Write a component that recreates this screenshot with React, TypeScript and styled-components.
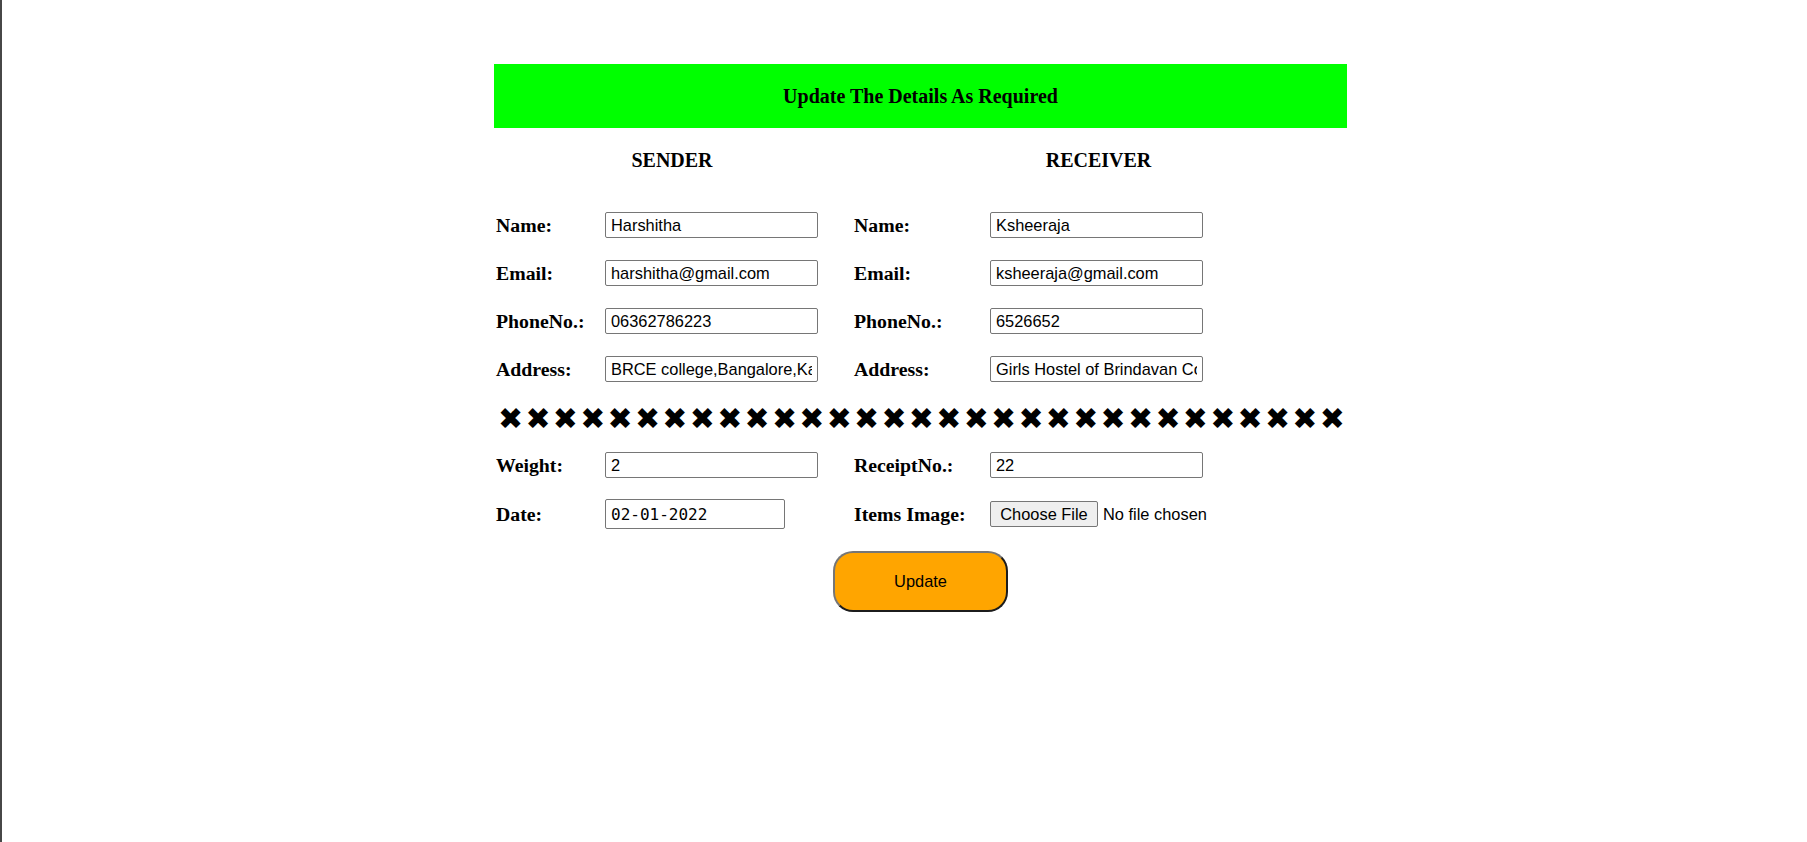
import React from "react";
import styled, { createGlobalStyle } from "styled-components";

const GlobalStyle = createGlobalStyle`
  html, body {
    margin: 0;
    padding: 0;
    background: #ffffff;
  }
  body {
    font-family: "Liberation Serif", "Times New Roman", serif;
    color: #000;
  }
`;

const Page = styled.div`
  box-sizing: border-box;
  min-height: 100vh;
  border-left: 2px solid #474747;
  padding: 64px 0 0 32px;
  display: flex;
  justify-content: center;
  align-items: flex-start;
`;

const Card = styled.div`
  width: 853px;
  display: flex;
  flex-direction: column;
`;

const Banner = styled.div`
  height: 64px;
  background: #00ff00;
  display: flex;
  align-items: center;
  justify-content: center;
  font: bold 20px "Liberation Serif", "Times New Roman", serif;
`;

const FormGrid = styled.div`
  display: grid;
  grid-template-columns: 109px 247px 138px 359px;
  grid-template-rows: 73px repeat(4, 48px) 48px 48px 50px;
`;

const Heading = styled.div`
  grid-column: span 2;
  align-self: start;
  height: 64px;
  display: flex;
  align-items: center;
  justify-content: center;
  font: bold 20px "Liberation Serif", "Times New Roman", serif;
`;

const Label = styled.div<{ $inset?: number }>`
  display: flex;
  align-items: center;
  padding-left: ${(p) => p.$inset ?? 2}px;
  font: bold 19.8px "Liberation Serif", "Times New Roman", serif;
  white-space: nowrap;
`;

const Field = styled.div`
  display: flex;
  align-items: center;
  padding-left: 2px;
`;

const TextInput = styled.input`
  box-sizing: border-box;
  width: 213px;
  height: 26px;
  border: 1px solid #767676;
  border-radius: 2px;
  padding: 0 5px;
  background: #fff;
  color: #000;
  font: 16.4px "Liberation Sans", Arial, sans-serif;
  outline: none;
`;

const DateInput = styled(TextInput)`
  width: 180px;
  height: 30px;
  font-family: "DejaVu Sans Mono", "Liberation Mono", monospace;
  font-size: 16px;
`;

const FileButton = styled.button`
  box-sizing: border-box;
  width: 108px;
  height: 26px;
  padding: 0;
  background: #efefef;
  border: 1px solid #767676;
  border-radius: 2px;
  color: #000;
  font: 16.4px "Liberation Sans", Arial, sans-serif;
`;

const FileText = styled.span`
  margin-left: 5px;
  font: 16.4px "Liberation Sans", Arial, sans-serif;
  white-space: nowrap;
`;

const Divider = styled.div`
  grid-column: 1 / -1;
  display: flex;
  justify-content: space-between;
  align-items: center;
  padding: 4px 2px 0 4px;
  font: 30px "DejaVu Sans", sans-serif;
  line-height: 1;
`;

const Cross = styled.span`
  display: block;
`;

const ButtonRow = styled.div`
  display: flex;
  justify-content: center;
  margin-top: 12px;
`;

const UpdateButton = styled.button`
  box-sizing: border-box;
  width: 175px;
  height: 61px;
  background: #ffa500;
  border: 2px solid;
  border-color: #767676 #1c1c1c #1c1c1c #767676;
  border-radius: 20px;
  color: #000;
  font: 16.4px "Liberation Sans", Arial, sans-serif;
`;

type Pair = { label: string; value: string };

const sender: Pair[] = [
  { label: "Name:", value: "Harshitha" },
  { label: "Email:", value: "harshitha@gmail.com" },
  { label: "PhoneNo.:", value: "06362786223" },
  { label: "Address:", value: "BRCE college,Bangalore,Karnataka" },
];

const receiver: Pair[] = [
  { label: "Name:", value: "Ksheeraja" },
  { label: "Email:", value: "ksheeraja@gmail.com" },
  { label: "PhoneNo.:", value: "6526652" },
  { label: "Address:", value: "Girls Hostel of Brindavan College" },
];

export default function App() {
  return (
    <>
      <GlobalStyle />
      <Page>
        <Card>
          <Banner>Update The Details As Required</Banner>
          <FormGrid>
            <Heading>SENDER</Heading>
            <Heading>RECEIVER</Heading>
            {sender.map((s, i) => (
              <React.Fragment key={i}>
                <Label>{s.label}</Label>
                <Field>
                  <TextInput type="text" defaultValue={s.value} />
                </Field>
                <Label $inset={4}>{receiver[i].label}</Label>
                <Field>
                  <TextInput type="text" defaultValue={receiver[i].value} />
                </Field>
              </React.Fragment>
            ))}
            <Divider>
              {Array.from({ length: 31 }).map((_, i) => (
                <Cross key={i}>✖</Cross>
              ))}
            </Divider>
            <Label>Weight:</Label>
            <Field>
              <TextInput type="text" defaultValue="2" />
            </Field>
            <Label $inset={4}>ReceiptNo.:</Label>
            <Field>
              <TextInput type="text" defaultValue="22" />
            </Field>
            <Label>Date:</Label>
            <Field>
              <DateInput type="text" defaultValue="02-01-2022" />
            </Field>
            <Label $inset={4}>Items Image:</Label>
            <Field>
              <FileButton type="button">Choose File</FileButton>
              <FileText>No file chosen</FileText>
            </Field>
          </FormGrid>
          <ButtonRow>
            <UpdateButton type="button">Update</UpdateButton>
          </ButtonRow>
        </Card>
      </Page>
    </>
  );
}
